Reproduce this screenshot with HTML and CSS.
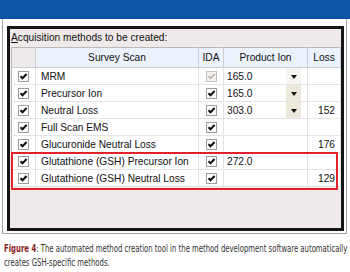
FILE: index.html
```html
<!DOCTYPE html>
<html lang="en">
<head>
  <meta charset="UTF-8">
  <title>Acquisition methods</title>
  <link rel="stylesheet" href="styles.css">
</head>
<body>
  <div class="topbar"></div>

  <div class="frame">
    <div class="window">
      <div class="caption-label"><u>A</u>cquisition methods to be created:</div>

      <div class="grid-wrap">
        <table class="grid">
          <colgroup>
            <col class="c-check">
            <col class="c-scan">
            <col class="c-ida">
            <col class="c-ion">
            <col class="c-loss">
          </colgroup>
          <thead>
            <tr>
              <th class="corner"></th>
              <th>Survey Scan</th>
              <th>IDA</th>
              <th>Product Ion</th>
              <th>Loss</th>
            </tr>
          </thead>
          <tbody id="rows"></tbody>
        </table>
        <!-- highlight around the GSH rows -->
        <div class="highlight"></div>
      </div>
    </div>
  </div>

  <div class="figure-box">
    <p class="figure-text"><b class="fig-num">Figure 4</b>: The automated method creation tool in the method development software automatically creates GSH-specific methods.</p>
  </div>

  <script>
    var rows = [
      { name: "MRM", idaOff: true, ion: "165.0", drop: "light", loss: "" },
      { name: "Precursor Ion", ion: "165.0", drop: "dark", loss: "" },
      { name: "Neutral Loss", ion: "303.0", drop: "dark", loss: "152" },
      { name: "Full Scan EMS", ion: "", loss: "" },
      { name: "Glucuronide Neutral Loss", ion: "", loss: "176" },
      { name: "Glutathione (GSH) Precursor Ion", ion: "272.0", loss: "" },
      { name: "Glutathione (GSH) Neutral Loss", ion: "", loss: "129" }
    ];

    function box(cls) {
      return '<svg class="cb ' + cls + '" width="11" height="11" viewBox="0 0 11 11">' +
        '<rect x="0.5" y="0.5" width="10" height="10" class="cb-box"/>' +
        '<path d="M2.5 5.2 L4.5 7.3 L8.6 3" class="cb-tick"/></svg>';
    }

    var html = "";
    rows.forEach(function (r) {
      html += '<tr>' +
        '<td class="chk">' + box("") + '</td>' +
        '<td class="name">' + r.name + '</td>' +
        '<td class="chk">' + box(r.idaOff ? "off" : "") + '</td>' +
        '<td class="ion"><span>' + r.ion + '</span>' +
          (r.drop ? '<span class="drop ' + r.drop + '"><i></i></span>' : '') + '</td>' +
        '<td class="loss">' + r.loss + '</td>' +
        '</tr>';
    });
    document.getElementById("rows").innerHTML = html;
  </script>
</body>
</html>
```

FILE: styles.css
```css
/* General */
body {
  margin: 0;
  background-color: #ffffff;
  font-family: "Liberation Sans", Arial, sans-serif;
  color: #111;
}

.topbar {
  height: 19px;
  background-color: #0c55a2;
}

/* screenshot frame */
.frame {
  margin: 0 3px 0 2px;
  border: 1px solid #a4a4a4;
  border-top: none;
  padding: 7px 2px 2px 4px;
}

.window {
  border: 3px solid #151515;
  background-color: #efe9e9;
  height: 199px;
}

.caption-label {
  height: 18px;
  line-height: 18px;
  padding-left: 1px;
  font-size: 10.2px;
}

.grid-wrap {
  position: relative;
  margin: 0 1px;
}

.grid {
  width: 329px;
  table-layout: fixed;
  border-collapse: collapse;
  font-size: 10.2px;
  border: 1px solid #b9b9b9;
}

.c-check { width: 24px; }
.c-scan { width: 163px; }
.c-ida { width: 25px; }
.c-ion { width: 84px; }
.c-loss { width: 33px; }

.grid th {
  height: 19px;
  padding: 0;
  font-weight: normal;
  text-align: center;
  background-color: #ebf2fb;
  border-right: 1px solid #c9ced6;
  border-bottom: 1px solid #c9ced6;
}

.grid th.corner {
  background-color: #efe9e9;
}

.grid td {
  height: 16px;
  padding: 0;
  background-color: #ffffff;
  border-right: 1px solid #e3e3e3;
  border-bottom: 1px solid #e3e3e3;
  white-space: nowrap;
  overflow: hidden;
}

.grid td.chk {
  text-align: center;
  line-height: 0;
}

.grid td.name {
  padding-left: 5px;
}

.grid td.ion {
  position: relative;
  padding-left: 3px;
}

.grid td.loss {
  text-align: right;
  padding-right: 5px;
}

/* checkbox */
.cb {
  display: inline-block;
  vertical-align: middle;
}

.cb-box {
  fill: #ffffff;
  stroke: #9c9c9c;
}

.cb-tick {
  fill: none;
  stroke: #111;
  stroke-width: 2;
}

.cb.off .cb-box {
  fill: #f4f2ee;
  stroke: #c4c0bb;
}

.cb.off .cb-tick {
  stroke: #b9b1a8;
  stroke-width: 1.6;
}

/* dropdown button in product ion cell */
.drop {
  position: absolute;
  top: 0;
  bottom: 0;
  right: 6px;
  width: 15px;
}

.drop.dark {
  background-color: #ece8dc;
}

.drop.light {
  background-color: #f7f6f2;
}

.drop i {
  position: absolute;
  left: 5px;
  top: 7px;
  border-left: 3px solid transparent;
  border-right: 3px solid transparent;
  border-top: 4px solid #111;
}

.highlight {
  position: absolute;
  left: 0;
  top: 105px;
  width: 323px;
  height: 34px;
  border: 2px solid #e0232a;
}

/* figure text: condensed face squeezed a bit more */
.figure-box {
  margin-top: 7px;
  padding-left: 4px;
  overflow: hidden;
}

.figure-text {
  margin: 0;
  width: 476px;
  transform: scaleX(0.73);
  transform-origin: 0 0;
  font-family: "DejaVu Sans Condensed", "Liberation Sans Narrow", "Liberation Sans", sans-serif;
  font-size: 10.5px;
  line-height: 14px;
  color: #333;
}

.fig-num {
  color: #8a1c1c;
}
```
